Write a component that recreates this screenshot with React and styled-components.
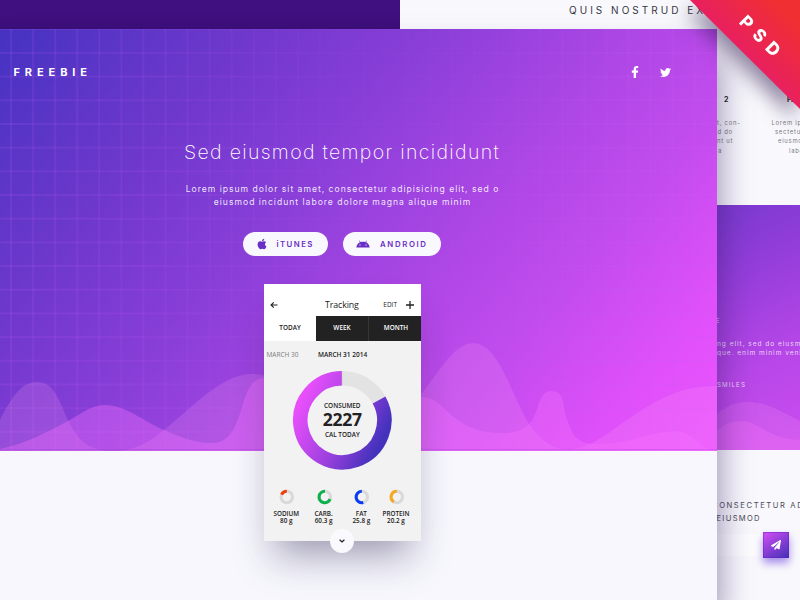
import React from 'react';
import styled, { createGlobalStyle } from 'styled-components';
import { FaFacebookF, FaTwitter, FaApple, FaPaperPlane } from 'react-icons/fa';

const Global = createGlobalStyle`
  *, *::before, *::after { box-sizing: border-box; }
  body { margin: 0; background: #f7f7fd; font-family: Inter, "Open Sans", sans-serif; }
  svg { display: block; }
`;

const Stage = styled.main`
  position: relative;
  display: flex;
  flex-direction: column;
  width: 800px;
  height: 600px;
  overflow: hidden;
`;

const TopStrip = styled.header`
  display: flex;
  flex: 0 0 29px;
  background: #f9f9fd;
`;
const DarkPanel = styled.div`
  width: 400px;
  background: linear-gradient(#400f80 60%, #3b0f78);
`;
const StripTitle = styled.div`
  padding-left: 169px;
  font-size: 10px;
  line-height: 20px;
  letter-spacing: 3.02px;
  white-space: nowrap;
  color: #38363f;
`;

const Pages = styled.div`
  display: flex;
  flex: 1;
  min-height: 0;
`;

/* ---------- front page ---------- */
const FrontPage = styled.article`
  position: relative;
  z-index: 1;
  flex: 0 0 717px;
  background: #f7f7fd;
  box-shadow: 2px 24px 32px rgba(45, 20, 95, 0.48);
`;

const Hero = styled.section`
  position: relative;
  height: 422px;
  background: linear-gradient(130deg, #4432c1 0%, #5835c6 10%, #7038cd 24%, #873ed7 39%, #9842de 48%, #b348e7 63%, #c24cee 73%, #e050fa 88%, #ec54ff 100%);
`;
const Grid = styled.div`
  position: absolute;
  inset: 0;
  background:
    linear-gradient(90deg, rgba(200, 95, 245, 0.15) 2px, transparent 2px) 10.2px 0 / 22.06px 100%,
    linear-gradient(180deg, rgba(200, 95, 245, 0.15) 2px, transparent 2px) 0 22.9px / 100% 23.7px;
  mask-image: linear-gradient(90deg, #000 0, rgba(0, 0, 0, 0.8) 22%, rgba(0, 0, 0, 0.2) 52%, rgba(0, 0, 0, 0.4) 70%, #000 88%);
`;
const HeroWaves = styled.svg`
  position: absolute;
  left: 0;
  bottom: 0;
`;
const HeroBody = styled.div`
  position: relative;
  display: flex;
  flex-direction: column;
  align-items: center;
  padding-right: 33px;
  color: #fff;
`;
const Nav = styled.nav`
  position: relative;
  display: flex;
  align-items: center;
  justify-content: space-between;
  height: 86px;
  padding: 0 46px 0 13.5px;
  color: #fff;
`;
const Brand = styled.div`
  font-size: 11px;
  font-weight: 700;
  letter-spacing: 4.9px;
`;
const Social = styled.div`
  display: flex;
  align-items: center;
  gap: 19px;
`;
const Title = styled.h1`
  margin: 19px 0 0;
  font-size: 19.5px;
  font-weight: 250;
  line-height: 37px;
  letter-spacing: 1.33px;
  white-space: nowrap;
`;
const Lead = styled.p`
  margin: 12px 0 0;
  padding-left: 1px;
  font-size: 8.6px;
  line-height: 12.9px;
  letter-spacing: 0.99px;
  text-align: center;
  white-space: nowrap;
  color: rgba(255, 255, 255, 0.88);
  & + & { margin: 0; }
`;
const Buttons = styled.div`
  display: flex;
  gap: 15px;
  margin-top: 23px;
`;
const Pill = styled.button`
  display: flex;
  align-items: center;
  gap: ${(p) => p.$gap}px;
  width: ${(p) => p.$w}px;
  height: 24px;
  padding: 0 0 0 13px;
  border: 0;
  border-radius: 12px;
  background: #f9f8fe;
  color: #6a2fc4;
  font: 600 7.8px Inter, sans-serif;
  letter-spacing: ${(p) => p.$track}px;
`;

/* ---------- tracking card ---------- */
const Card = styled.section`
  position: relative;
  display: flex;
  flex-direction: column;
  align-items: stretch;
  width: 157px;
  height: 257px;
  margin: -167px 0 0 264px;
  background: #f2f2f2;
  font-family: "Open Sans", sans-serif;
  color: #222;
  box-shadow: 0 24px 34px -16px rgba(45, 38, 75, 0.42), 0 26px 36px rgba(60, 45, 110, 0.1);
`;
const CardHead = styled.header`
  display: flex;
  align-items: center;
  height: 32px;
  padding: 9px 7px 0 6px;
  background: #fff;
`;
const CardTitle = styled.div`
  flex: 1;
  padding-left: 47px;
  font-size: 8.8px;
  letter-spacing: -0.1px;
`;
const Edit = styled.div`
  margin-right: 9px;
  font-size: 6.5px;
`;
const Tabs = styled.div`
  display: grid;
  grid-template-columns: 52px 52px 53px;
  height: 25px;
`;
const Tab = styled.div`
  display: flex;
  align-items: center;
  justify-content: center;
  padding-bottom: 2px;
  padding-left: ${(p) => (p.$shift ? 2 : 0)}px;
  border-left: ${(p) => (p.$shift ? '1px solid #373737' : '0')};
  background: ${(p) => (p.$active ? '#fff' : '#222')};
  color: ${(p) => (p.$active ? '#222' : '#fff')};
  font-size: 6.4px;
  font-weight: 600;
`;
const Dates = styled.div`
  display: flex;
  gap: 19.5px;
  height: 27px;
  padding: 0 0 0 2.5px;
  font-size: 6.5px;
  line-height: 28px;
  font-weight: 600;
  white-space: nowrap;
  & > :first-child { color: #7d7d7d; font-weight: 400; }
`;
const Donut = styled.div`
  display: grid;
  width: 100px;
  height: 100px;
  margin: 2px 0 0 28px;
  & > * { grid-area: 1 / 1; }
`;
const DonutText = styled.div`
  display: flex;
  flex-direction: column;
  align-items: center;
  padding: 31px 0 0 0.6px;
  font-size: 6.4px;
  font-weight: 600;
  line-height: 9px;
  & > strong {
    font-size: 17.6px;
    font-weight: 700;
    line-height: 19px;
    letter-spacing: -0.3px;
  }
  & > :last-child { margin-top: 1px; }
`;
const Nutrients = styled.div`
  display: grid;
  grid-template-columns: 38.6px 36px 39.6px 29.6px;
  margin: 18.5px 0 0 3px;
`;
const Nutrient = styled.div`
  display: flex;
  flex-direction: column;
  align-items: center;
  font-size: 6.35px;
  font-weight: 600;
  line-height: 7.3px;
  white-space: nowrap;
  & > svg { margin-bottom: 5.5px; transform: translateX(0.8px); }
`;
const MoreButton = styled.div`
  position: absolute;
  left: 66px;
  bottom: -12px;
  display: grid;
  place-items: center;
  width: 24px;
  height: 24px;
  border-radius: 50%;
  background: #f9f9fe;
`;

/* ---------- back page ---------- */
const BackPage = styled.article`
  display: flex;
  flex-direction: column;
  flex: 0 0 83px;
  overflow: hidden;
  background: #f9f9fd;
  white-space: nowrap;
`;
const Features = styled.section`
  display: flex;
  height: 176px;
  padding-top: 66px;
`;
const Feature = styled.div`
  flex: 0 0 auto;
  width: ${(p) => p.$w}px;
`;
const FeatureTitle = styled.h3`
  margin: 0 0 13.5px ${(p) => p.$x}px;
  font-size: 7px;
  line-height: 9px;
  font-weight: 700;
  color: #222;
`;
const FeatureLine = styled.div`
  padding-left: ${(p) => p.$x}px;
  font-size: 5.9px;
  line-height: 9.45px;
  letter-spacing: 0.75px;
  color: #7b7982;
`;
const BackHero = styled.section`
  position: relative;
  height: 245px;
  padding-top: 112px;
  background: linear-gradient(155deg, #7a3acf 0%, #963edb 30%, #b847e8 65%, #cc4df1 100%);
  color: rgba(255, 255, 255, 0.78);
`;
const BackText = styled.div`
  margin-top: ${(p) => p.$top || 0}px;
  margin-left: ${(p) => p.$x || 0}px;
  font-size: ${(p) => p.$size || 6.6}px;
  line-height: 9px;
  letter-spacing: ${(p) => p.$track || 0.95}px;
`;
const BackWaves = styled.svg`
  position: absolute;
  left: 0;
  bottom: 0;
`;
const Signup = styled.section`
  flex: 1;
  padding-top: 50px;
  color: #4d4b54;
`;
const SignupLine = styled.div`
  margin-left: ${(p) => p.$x}px;
  font-size: 7.6px;
  line-height: 12.6px;
  letter-spacing: ${(p) => p.$track}px;
`;
const SignupForm = styled.div`
  display: flex;
  align-items: center;
  margin-top: 6.8px;
`;
const Field = styled.div`
  width: 46px;
  height: 22px;
  background: #fdfdff;
`;
const Send = styled.button`
  display: grid;
  place-items: center;
  width: 26px;
  height: 26px;
  padding: 0;
  border: 1px solid rgba(90, 30, 190, 0.45);
  background: linear-gradient(145deg, #d94ff5 0%, #9140da 45%, #4330b4 100%);
  background-origin: border-box;
  color: #fff;
  box-shadow: 0 5px 8px rgba(95, 45, 215, 0.55);
`;

/* ---------- corner ribbon ---------- */
const Ribbon = styled.div`
  position: absolute;
  top: 0;
  right: 0;
  z-index: 3;
  width: 110px;
  height: 109px;
  filter: drop-shadow(-5px 10px 10px rgba(35, 15, 70, 0.5));
`;
const RibbonFace = styled.div`
  height: 100%;
  background: linear-gradient(45deg, #e9205f 50%, #ef2f32 88%);
  clip-path: polygon(0 0, 100% 0, 100% 100%);
`;
const RibbonText = styled.div`
  position: absolute;
  left: 30px;
  top: 26px;
  width: 80px;
  padding-left: 7px;
  font-size: 17.5px;
  font-weight: 800;
  line-height: 20px;
  letter-spacing: 7px;
  text-align: center;
  color: #fff;
  transform: rotate(45deg);
`;

function arcPath(c, r, from, to) {
  const pt = (deg) => {
    const a = ((deg - 90) * Math.PI) / 180;
    return `${(c + r * Math.cos(a)).toFixed(2)} ${(c + r * Math.sin(a)).toFixed(2)}`;
  };
  return `M${pt(from)}A${r} ${r} 0 ${to - from > 180 ? 1 : 0} 1 ${pt(to)}`;
}

function Ring({ color, from, to }) {
  return (
    <svg width="16" height="16" viewBox="0 0 16 16" fill="none" strokeWidth="3.1">
      <circle cx="8" cy="8" r="5.7" stroke="#d9d9d9" />
      <path d={arcPath(8, 5.7, from, to)} stroke={color} />
    </svg>
  );
}

function AndroidHead() {
  return (
    <svg width="14" height="8" viewBox="0 0 14 8">
      <path
        fill="currentColor"
        fillRule="evenodd"
        d="M0.300 7.500C0.600 4.900 2 3 4 2.200L3 0.800 3.400 0.500 4.500 2C6.100 1.500 7.900 1.500 9.500 2L10.600 0.500 11 0.800 10 2.200C12 3 13.400 4.900 13.700 7.500ZM4 4.300a.6.6 0 1 0 0 1.200.6.6 0 0 0 0-1.200ZM10 4.300a.6.6 0 1 0 0 1.200.6.6 0 0 0 0-1.200Z"
      />
    </svg>
  );
}

const nutrients = [
  { name: 'SODIUM', value: '80 g', color: '#f23d0c', from: 295, to: 360 },
  { name: 'CARB.', value: '60.3 g', color: '#0db14b', from: 112, to: 362 },
  { name: 'FAT', value: '25.8 g', color: '#0a3cf5', from: 165, to: 360 },
  { name: 'PROTEIN', value: '20.2 g', color: '#f7a823', from: 212, to: 360 },
];

export default function App() {
  return (
    <Stage>
      <Global />
      <TopStrip>
        <DarkPanel />
        <StripTitle>QUIS NOSTRUD EX</StripTitle>
      </TopStrip>
      <Pages>
        <FrontPage>
          <Hero>
            <Grid />
            <HeroWaves width="717" height="110" viewBox="0 341 717 110">
              <path
                fill="#ffa0f2"
                fillOpacity="0.19"
                d="M0 420C11 399 20 382 37 382C56 382 60 405 69 422C79 442 90 451 112 451C140 451 153 438 164 430C195 405 222 374 252 374C300 374 330 430 360 440C385 447 405 415 421 394C437 376 453 343 473 343C499 343 512 397 529 424C541 441 554 449.500 567 449.500C590 449.500 610 431 630 418C655 401 678 386 717 386V451H0Z"
              />
              <path
                fill="#f872ff"
                fillOpacity="0.36"
                d="M0 449C25 444 45 433 68 421C80 415 90 405 105 405C125 405 145 422 164 430C180 437 195 443 212 443C248 443 236 378 264 378C310 378 380 397 421 397C447 397 450 433 501 433C517 433 525 429 530 423C540 411 538 391 551 391C566 391 562 407 568 422C574 439 580 444 598 444C630 444 653 431 675 431C692 431 700 449 717 451H0Z"
              />
              <path d="M0 449.500H717" stroke="#8a2fd0" strokeOpacity="0.22" />
            </HeroWaves>
            <Nav>
              <Brand>FREEBIE</Brand>
              <Social>
                <FaFacebookF size={12} />
                <FaTwitter size={11} />
              </Social>
            </Nav>
            <HeroBody>
              <Title>Sed eiusmod tempor incididunt</Title>
              <Lead>Lorem ipsum dolor sit amet, consectetur adipisicing elit, sed o</Lead>
              <Lead>eiusmod incidunt labore dolore magna alique minim</Lead>
              <Buttons>
                <Pill $w={85} $gap={8.5} $track={1.45}>
                  <FaApple size={12} />
                  iTUNES
                </Pill>
                <Pill $w={98} $gap={10} $track={1.65}>
                  <AndroidHead />
                  ANDROID
                </Pill>
              </Buttons>
            </HeroBody>
          </Hero>
          <Card>
            <CardHead>
              <svg width="8" height="8" viewBox="0 0 8 8" fill="none" stroke="#222" strokeWidth="1.1">
                <path d="M7.500 4H1M3.800 1.300L1 4l2.800 2.700" />
              </svg>
              <CardTitle>Tracking</CardTitle>
              <Edit>EDIT</Edit>
              <svg width="8" height="8" viewBox="0 0 8 8" stroke="#222" strokeWidth="1.3">
                <path d="M4 0v8M0 4h8" />
              </svg>
            </CardHead>
            <Tabs>
              <Tab $active>TODAY</Tab>
              <Tab>WEEK</Tab>
              <Tab $shift>MONTH</Tab>
            </Tabs>
            <Dates>
              <span>MARCH 30</span>
              <span>MARCH 31 2014</span>
            </Dates>
            <Donut>
              <svg width="100" height="100" viewBox="0 0 100 100" fill="none" strokeWidth="14.600">
                <defs>
                  <linearGradient id="ring" gradientUnits="userSpaceOnUse" x1="20" y1="8" x2="100" y2="48">
                    <stop offset="0" stopColor="#e84ffb" />
                    <stop offset="0.55" stopColor="#9d40de" />
                    <stop offset="1" stopColor="#4432bd" />
                  </linearGradient>
                </defs>
                <path d={arcPath(50.3, 42, 0, 61)} stroke="#e3e3e3" />
                <path d={arcPath(50.3, 42, 61, 360)} stroke="url(#ring)" />
                <path d="M50.300 1v14.600" stroke="#d9f2d4" strokeWidth="0.8" />
              </svg>
              <DonutText>
                <span>CONSUMED</span>
                <strong>2227</strong>
                <span>CAL TODAY</span>
              </DonutText>
            </Donut>
            <Nutrients>
              {nutrients.map((n) => (
                <Nutrient key={n.name}>
                  <Ring color={n.color} from={n.from} to={n.to} />
                  <span>{n.name}</span>
                  <span>{n.value}</span>
                </Nutrient>
              ))}
            </Nutrients>
            <MoreButton>
              <svg width="6" height="4" viewBox="0 0 6 4" fill="none" stroke="#222" strokeWidth="1.2">
                <path d="M0.600 0.700L3 3 5.400 0.700" />
              </svg>
            </MoreButton>
          </Card>
        </FrontPage>

        <BackPage>
          <Features>
            <Feature $w={54}>
              <FeatureTitle $x={7}>2</FeatureTitle>
              <FeatureLine $x={0}>t, con-</FeatureLine>
              <FeatureLine $x={0.5}>d do</FeatureLine>
              <FeatureLine $x={0}>nt ut</FeatureLine>
              <FeatureLine $x={1}>a</FeatureLine>
            </Feature>
            <Feature $w={60}>
              <FeatureTitle $x={16}>FEATURE 3</FeatureTitle>
              <FeatureLine $x={0.5}>Lorem ipsum</FeatureLine>
              <FeatureLine $x={4}>sectetur</FeatureLine>
              <FeatureLine $x={7}>eiusmod</FeatureLine>
              <FeatureLine $x={18}>labore</FeatureLine>
            </Feature>
          </Features>
          <BackHero>
            <BackWaves width="83" height="50" viewBox="717 400 83 50">
              <path fill="#ffa0f2" fillOpacity="0.17" d="M717 414C727 406 735 402 748 402C768 402 783 413 800 421V450H717Z" />
              <path fill="#ff7cf8" fillOpacity="0.25" d="M717 430C725 424 732 421 742 421C758 421 768 439 800 440V450H717Z" />
            </BackWaves>
            <BackText $x={-1.5}>E</BackText>
            <BackText $top={14}>ng elit, sed do eiusmod</BackText>
            <BackText>que. enim minim veniam</BackText>
            <BackText $top={22} $size={6.2} $track={1.1}>SMILES</BackText>
          </BackHero>
          <Signup>
            <SignupLine $x={-5} $track={1.6}>CONSECTETUR AD</SignupLine>
            <SignupLine $x={-0.5} $track={1.3}>EIUSMOD</SignupLine>
            <SignupForm>
              <Field />
              <Send aria-label="Send">
                <FaPaperPlane size={10} />
              </Send>
            </SignupForm>
          </Signup>
        </BackPage>
      </Pages>
      <Ribbon>
        <RibbonFace />
        <RibbonText>PSD</RibbonText>
      </Ribbon>
    </Stage>
  );
}
